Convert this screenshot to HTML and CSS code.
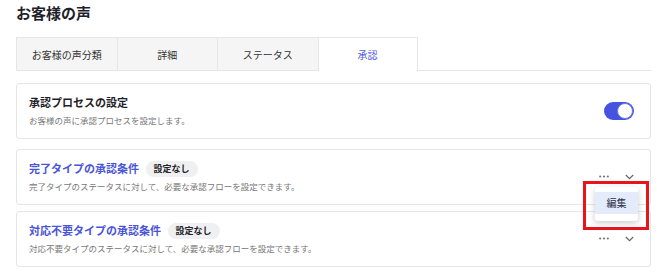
FILE: index.html
```html
<!DOCTYPE html>
<html>
<head>
    <title>お客様の声</title>
    <link rel="stylesheet" href="styles.css">
</head>
<body>
    <div class="page">
        <h1 class="page-title">お客様の声</h1>

        <div class="tabs">
            <div class="tab">お客様の声分類</div>
            <div class="tab">詳細</div>
            <div class="tab">ステータス</div>
            <div class="tab active">承認</div>
            <div class="tab-rest"></div>
        </div>

        <div class="card">
            <div class="card-body">
                <div class="card-title">承認プロセスの設定</div>
                <div class="card-desc">お客様の声に承認プロセスを設定します。</div>
            </div>
            <div class="toggle on"><span class="knob"></span></div>
        </div>

        <div class="card cond">
            <div class="card-body">
                <div class="card-title link">完了タイプの承認条件 <span class="badge">設定なし</span></div>
                <div class="card-desc">完了タイプのステータスに対して、必要な承認フローを設定できます。</div>
            </div>
            <div class="actions">
                <svg class="dots" width="10" height="3" viewBox="0 0 10 3"><circle cx="1.2" cy="1.5" r="1.1" fill="#777"/><circle cx="5" cy="1.5" r="1.1" fill="#777"/><circle cx="8.8" cy="1.5" r="1.1" fill="#777"/></svg>
                <svg class="chevron" width="9" height="6" viewBox="0 0 9 6"><path d="M0.8 1l3.7 3.7 3.7-3.7" fill="none" stroke="#666" stroke-width="1.2"/></svg>
            </div>
            <div class="menu">
                <div class="menu-item">編集</div>
            </div>
            <div class="highlight"></div>
        </div>

        <div class="card cond">
            <div class="card-body">
                <div class="card-title link">対応不要タイプの承認条件 <span class="badge">設定なし</span></div>
                <div class="card-desc">対応不要タイプのステータスに対して、必要な承認フローを設定できます。</div>
            </div>
            <div class="actions">
                <svg class="dots" width="10" height="3" viewBox="0 0 10 3"><circle cx="1.2" cy="1.5" r="1.1" fill="#777"/><circle cx="5" cy="1.5" r="1.1" fill="#777"/><circle cx="8.8" cy="1.5" r="1.1" fill="#777"/></svg>
                <svg class="chevron" width="9" height="6" viewBox="0 0 9 6"><path d="M0.8 1l3.7 3.7 3.7-3.7" fill="none" stroke="#666" stroke-width="1.2"/></svg>
            </div>
        </div>
    </div>
</body>
</html>
```

FILE: styles.css
```css
body {
    margin: 0;
    background: #fff;
    font-family: "Noto Sans CJK JP", "Noto Sans", sans-serif;
    color: #222;
}

.page {
    padding: 4px 19px 0 16px;
}

.page-title {
    font-size: 15px;
    font-weight: bold;
    line-height: 18px;
    margin: 0 0 15px;
    color: #1f1f2b;
}

.tabs {
    display: flex;
    height: 34px;
    margin-bottom: 12px;
}

.tab {
    box-sizing: border-box;
    width: 100.5px;
    display: flex;
    align-items: center;
    justify-content: center;
    font-size: 10px;
    color: #333;
    background: #f5f5f6;
    border: 1px solid #e6e6e8;
    border-right: none;
}

.tab.active {
    width: 100px;
    background: #fff;
    color: #5560d8;
    border-right: 1px solid #e6e6e8;
    border-bottom: none;
}

.tab-rest {
    flex: 1;
    border-bottom: 1px solid #e6e6e8;
}

.card {
    position: relative;
    display: flex;
    align-items: center;
    border: 1px solid #e5e5e8;
    border-radius: 3px;
    padding: 8px 16px 9px 12px;
    margin-bottom: 10px;
}

.card.cond {
    margin-bottom: 6px;
}

.card-body {
    flex: 1;
}

.card-title {
    font-size: 11px;
    font-weight: bold;
    line-height: 20px;
    color: #1f1f2b;
}

.card-title.link {
    color: #4a55d6;
}

.badge {
    display: inline-block;
    margin-left: 4px;
    padding: 0 8px;
    height: 16px;
    line-height: 16px;
    border-radius: 8px;
    background: #f0f0f2;
    color: #222;
    font-size: 9px;
    vertical-align: 1px;
}

.card-desc {
    font-size: 8.5px;
    line-height: 17px;
    color: #777;
}

.toggle {
    width: 30px;
    height: 18px;
    border-radius: 9px;
    background: #4553e0;
    position: relative;
}

.knob {
    position: absolute;
    top: 1px;
    right: 1px;
    width: 14px;
    height: 14px;
    border-radius: 50%;
    background: #fff;
    border: 1px solid #6f79e6;
}

.actions {
    display: flex;
    align-items: center;
    gap: 16px;
}

.dots,
.chevron {
    display: block;
}

.menu {
    position: absolute;
    top: 37px;
    left: 578px;
    width: 43px;
    padding: 5px 0 7px;
    background: #fff;
    border-radius: 3px;
    box-shadow: 0 2px 6px rgba(0, 0, 0, 0.2);
    z-index: 2;
}

.menu-item {
    background: #e4ecfb;
    font-size: 10px;
    line-height: 22px;
    text-align: center;
    color: #2b2f4a;
}

.highlight {
    position: absolute;
    top: 31px;
    left: 566px;
    width: 60px;
    height: 43px;
    border: 3px solid #e8141b;
    z-index: 3;
}
```
